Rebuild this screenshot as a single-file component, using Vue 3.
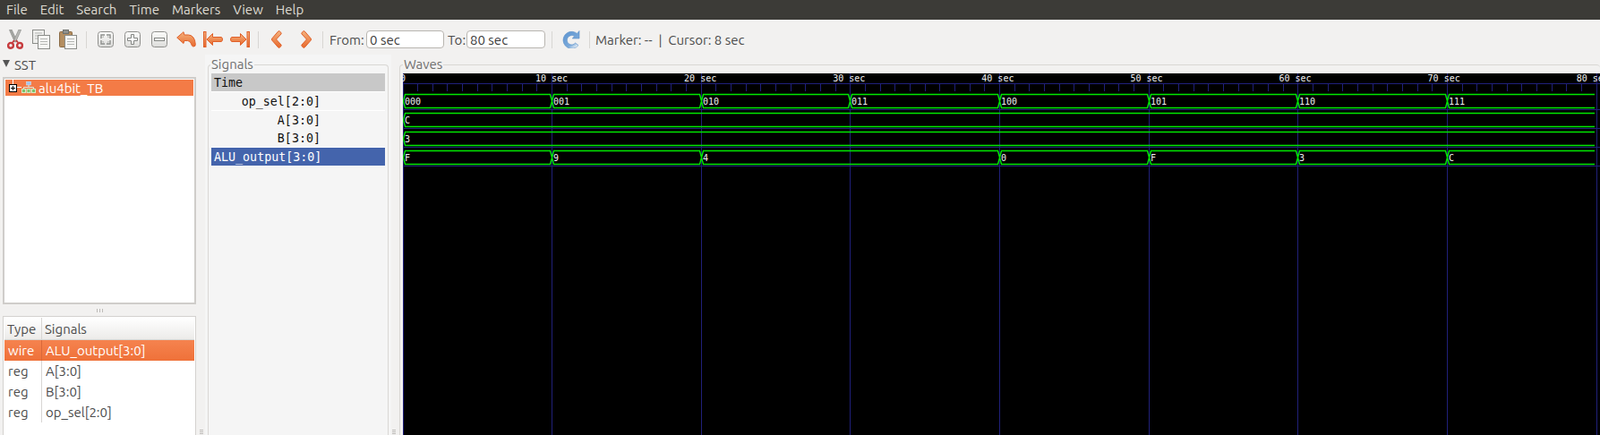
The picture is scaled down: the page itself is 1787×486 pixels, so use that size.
<template>
  <div class="app">
    <div class="menubar">
      <span v-for="m in menus" :key="m" class="menu">{{ m }}</span>
    </div>

    <div class="toolbar">
      <!-- cut -->
      <button class="tool">
        <svg width="18" height="22" viewBox="0 0 18 22">
          <path d="M2.5 0.5 L5 0 L11 13 L8.5 14 Z" fill="#a5a7a3" stroke="#8b8d89" stroke-width="0.7" />
          <path d="M15.5 0.5 L13 0 L7 13 L9.5 14 Z" fill="#b9bab7" stroke="#8b8d89" stroke-width="0.7" />
          <circle cx="4" cy="17.8" r="2.9" fill="none" stroke="#c63c3e" stroke-width="2.4" />
          <circle cx="14" cy="17.8" r="2.9" fill="none" stroke="#c63c3e" stroke-width="2.4" />
          <path d="M6 14.5 L8 12 M12 14.5 L10 12" stroke="#c63c3e" stroke-width="2" />
        </svg>
      </button>
      <!-- copy -->
      <button class="tool ml-10">
        <svg width="20" height="22" viewBox="0 0 20 22">
          <rect x="0.5" y="0.5" width="13" height="15" fill="#eeeeec" stroke="#8b8d89" />
          <path d="M3 4h8M3 7h8M3 10h8" stroke="#b4b6b3" />
          <rect x="6.5" y="6.5" width="13" height="15" fill="#f6f6f4" stroke="#8b8d89" />
          <path d="M9 10.5h8M9 13.5h8M9 16.5h8" stroke="#b4b6b3" />
        </svg>
      </button>
      <!-- paste -->
      <button class="tool ml-10">
        <svg width="20" height="22" viewBox="0 0 20 22">
          <rect x="0.5" y="2.5" width="14" height="17" rx="1" fill="#b48e60" stroke="#8a6a44" />
          <rect x="4.5" y="0.5" width="6" height="4" fill="#8f918d" stroke="#6f716d" />
          <rect x="6.5" y="6.5" width="13" height="15" fill="#f6f6f4" stroke="#8b8d89" />
          <path d="M9 10.5h8M9 13.5h8M9 16.5h8" stroke="#b4b6b3" />
        </svg>
      </button>
      <i class="sep ml-10"></i>
      <!-- zoom fit / in / out -->
      <button class="tool ml-12">
        <svg width="18" height="18" viewBox="0 0 18 18">
          <defs>
            <linearGradient id="keycap" x1="0" y1="0" x2="0" y2="1">
              <stop offset="0" stop-color="#fbfbfa" />
              <stop offset="1" stop-color="#dcdcda" />
            </linearGradient>
            <linearGradient id="orange" x1="0" y1="0" x2="0" y2="1">
              <stop offset="0" stop-color="#f4b27e" />
              <stop offset="1" stop-color="#e8692c" />
            </linearGradient>
            <linearGradient id="blue" x1="0" y1="0" x2="0.7" y2="1">
              <stop offset="0" stop-color="#5c94d0" />
              <stop offset="0.75" stop-color="#7aa9da" />
              <stop offset="1" stop-color="#eaf0f6" />
            </linearGradient>
          </defs>
          <rect x="0.5" y="0.5" width="17" height="17" rx="3" fill="url(#keycap)" stroke="#8f8f8c" />
          <path d="M8 4H4v4M10 4h4v4M14 10v4h-4M8 14H4v-4" fill="none" stroke="#8f918e" stroke-width="1.4" />
          <path d="M7 6H6v1M11 6h1v1M12 11v1h-1M7 12H6v-1" fill="none" stroke="#b0b2af" />
        </svg>
      </button>
      <button class="tool ml-12">
        <svg width="18" height="18" viewBox="0 0 18 18">
          <rect x="0.5" y="0.5" width="17" height="17" rx="3" fill="url(#keycap)" stroke="#8f8f8c" />
          <path d="M7.5 3.5h3v4h4v3h-4v4h-3v-4h-4v-3h4z" fill="#fff" stroke="#858784" />
        </svg>
      </button>
      <button class="tool ml-12">
        <svg width="18" height="18" viewBox="0 0 18 18">
          <rect x="0.5" y="0.5" width="17" height="17" rx="3" fill="url(#keycap)" stroke="#8f8f8c" />
          <rect x="3.5" y="7.5" width="11" height="3" fill="#fff" stroke="#858784" />
        </svg>
      </button>
      <!-- undo zoom -->
      <button class="tool ml-10">
        <svg width="22" height="18" viewBox="0 0 22 18">
          <path d="M0.7 7 L8 0.7 L8.8 4 L13.5 4 Q20.5 4.5 21.3 14.5 Q21.5 17.2 18.8 17 Q17.2 16.8 16.6 14 Q15.5 10.5 12.5 10.5 L8.8 10.5 L8 13.5 Z" fill="url(#orange)" stroke="#e0602a" stroke-linejoin="round" />
        </svg>
      </button>
      <!-- zoom to start -->
      <button class="tool ml-8">
        <svg width="22" height="18" viewBox="0 0 22 18">
          <rect x="0.5" y="0.5" width="2.5" height="17" fill="url(#orange)" stroke="#e0602a" />
          <path d="M4 9 L10.5 2.5 L10.5 6.5 L20 6.5 Q21.5 6.8 21.5 9 Q21.5 11.2 20 11.5 L10.5 11.5 L10.5 15.5 Z" fill="url(#orange)" stroke="#e0602a" stroke-linejoin="round" />
        </svg>
      </button>
      <!-- zoom to end -->
      <button class="tool ml-8">
        <svg width="22" height="18" viewBox="0 0 22 18">
          <rect x="19" y="0.5" width="2.5" height="17" fill="url(#orange)" stroke="#e0602a" />
          <path d="M18 9 L11.5 2.5 L11.5 6.5 L2 6.5 Q0.5 6.8 0.5 9 Q0.5 11.2 2 11.5 L11.5 11.5 L11.5 15.5 Z" fill="url(#orange)" stroke="#e0602a" stroke-linejoin="round" />
        </svg>
      </button>
      <i class="sep ml-9"></i>
      <button class="tool ml-14">
        <svg width="12" height="20" viewBox="0 0 12 20">
          <path d="M8 0.7 Q9 0.3 11 2.5 Q11.5 3.2 11 4 L5.5 10 L11 16 Q11.5 16.8 11 17.5 Q9 19.7 8 19.3 L0.8 11 Q0.2 10 0.8 9 Z" fill="url(#orange)" stroke="#e0602a" stroke-linejoin="round" />
        </svg>
      </button>
      <button class="tool ml-21">
        <svg width="12" height="20" viewBox="0 0 12 20">
          <path d="M4 0.7 Q3 0.3 1 2.5 Q0.5 3.2 1 4 L6.5 10 L1 16 Q0.5 16.8 1 17.5 Q3 19.7 4 19.3 L11.2 11 Q11.8 10 11.2 9 Z" fill="url(#orange)" stroke="#e0602a" stroke-linejoin="round" />
        </svg>
      </button>
      <i class="sep ml-12"></i>
      <label class="lbl lbl-from">From:</label>
      <input class="field field-from" value="0 sec" />
      <label class="lbl lbl-to">To:</label>
      <input class="field field-to" value="80 sec" />
      <i class="sep ml-7"></i>
      <button class="tool ml-11">
        <svg width="20" height="20" viewBox="0 0 20 20">
          <path d="M19 0.5 L19 9 L11.2 9 L13.6 6.6 A5.2 5.2 0 1 0 14.6 14 L18 16.6 A9.5 9.5 0 1 1 12 1.4 A9.5 9.5 0 0 1 16.4 3.4 Z" fill="url(#blue)" stroke="#5a8fc8" stroke-width="0.6" />
        </svg>
      </button>
      <i class="sep ml-10"></i>
      <span class="status">Marker: -- &nbsp;|&nbsp; Cursor: 8 sec</span>
    </div>

    <div class="main">
      <aside class="left">
        <div class="expander"><i class="tri"></i>SST</div>
        <div class="tree">
          <div class="tree-row">
            <i class="stub"></i>
            <svg class="plus" width="9" height="9" viewBox="0 0 9 9">
              <rect x="0.5" y="0.5" width="8" height="8" fill="#fff" stroke="#000" />
              <path d="M2 4.5h5M4.5 2v5" stroke="#000" />
            </svg>
            <svg class="hier" width="16" height="13" viewBox="0 0 16 13">
              <rect x="5.5" y="0" width="5" height="4" fill="#a3c4ea" stroke="#dfe8f2" stroke-width="0.5" />
              <path d="M8 4v3M2.5 8.500V6.500h11v2" stroke="#e3e6da" fill="none" />
              <rect x="0.500" y="8.500" width="4" height="4" fill="#7ec26a" stroke="#d6ecc8" />
              <rect x="6" y="8.500" width="4" height="4" fill="#7ec26a" stroke="#d6ecc8" />
              <rect x="11.500" y="8.500" width="4" height="4" fill="#7ec26a" stroke="#d6ecc8" />
            </svg>
            <span>alu4bit_TB</span>
          </div>
        </div>
        <div class="grip"><i></i><i></i><i></i></div>
        <div class="list">
          <div class="list-head">
            <span class="c1">Type</span>
            <span class="c2">Signals</span>
          </div>
          <div v-for="(s, i) in typeRows" :key="s.name" class="list-row" :class="{ sel: i === 0 }">
            <span class="c1">{{ s.type }}</span>
            <span class="c2">{{ s.name }}</span>
          </div>
        </div>
      </aside>

      <section class="signals">
        <fieldset class="frame sig-frame">
          <legend>Signals</legend>
          <div class="sig-list">
            <div class="sig time">Time</div>
            <div v-for="(s, i) in signals" :key="s" class="sig" :class="{ active: i === 3 }">{{ s }}</div>
          </div>
        </fieldset>
      </section>

      <section class="waves">
        <fieldset class="frame wave-frame">
          <legend>Waves</legend>
          <svg class="canvas" width="1337" height="404" viewBox="0 0 1337 404">
            <path v-for="x in minorTicks" :key="'m' + x" :d="`M${x + 0.5} 11V20`" stroke="#20207a" />
            <path v-for="x in majorTicks" :key="'g' + x" :d="`M${x + 0.5} 0V404`" stroke="#20207a" />
            <path v-for="y in rowLines" :key="'r' + y" :d="`M0 ${y + 0.5}H1337`" stroke="#20207a" />
            <text v-for="(t, i) in timeLabels" :key="t" class="ruler" :x="labelX(i)" y="9">{{ t }}</text>
            <g v-for="(row, r) in rows" :key="r">
              <path :d="wavePath(row, r)" fill="none" stroke="#00e800" stroke-width="1.4" />
              <text v-for="seg in row" :key="seg.at" class="val" :x="segX(seg.at) + 2" :y="rowTop(r) + 12">{{ seg.v }}</text>
            </g>
          </svg>
        </fieldset>
      </section>

      <i class="pane-grip grip-a"></i>
      <i class="pane-grip grip-b"></i>
    </div>
  </div>
</template>

<script setup>
const menus = ['File', 'Edit', 'Search', 'Time', 'Markers', 'View', 'Help']

const typeRows = [
  { type: 'wire', name: 'ALU_output[3:0]' },
  { type: 'reg', name: 'A[3:0]' },
  { type: 'reg', name: 'B[3:0]' },
  { type: 'reg', name: 'op_sel[2:0]' }
]

const signals = ['op_sel[2:0]', 'A[3:0]', 'B[3:0]', 'ALU_output[3:0]']

// 10 sec = 166.66px on the canvas
const step = 166.66
const segX = (at) => Math.floor(at * step)

const majorTicks = Array.from({ length: 9 }, (_, i) => segX(i))
const minorTicks = Array.from({ length: 80 }, (_, i) => Math.floor((i * step) / 10))
const rowLines = [11, 40, 61, 82, 103]

const timeLabels = ['0', '10 sec', '20 sec', '30 sec', '40 sec', '50 sec', '60 sec', '70 sec', '80 sec']
const labelX = (i) => (i === 0 ? -3 : 148 + (i - 1) * 166.1)

const rows = [
  ['000', '001', '010', '011', '100', '101', '110', '111'].map((v, at) => ({ v, at })),
  [{ v: 'C', at: 0 }],
  [{ v: '3', at: 0 }],
  [
    { v: 'F', at: 0 },
    { v: '9', at: 1 },
    { v: '4', at: 2 },
    { v: '0', at: 4 },
    { v: 'F', at: 5 },
    { v: '3', at: 6 },
    { v: 'C', at: 7 }
  ]
]

const rowTop = (r) => 23 + r * 21

const wavePath = (row, r) => {
  const top = rowTop(r) + 0.5
  const bottom = top + 15
  const mid = top + 7.5
  const end = 1331
  let d = ''
  const edges = [...row.map((s) => s.at), 8]
  for (let i = 0; i < edges.length - 1; i++) {
    const a = segX(edges[i]) + 0.5
    const last = edges[i + 1] === 8
    const b = last ? end : segX(edges[i + 1]) - 1.5
    // last segment stays open on the right
    const close = last ? '' : `L${b + 2} ${mid}`
    d += `M${a} ${mid}L${a + 2} ${top}H${b}${close}`
    d += `M${a} ${mid}L${a + 2} ${bottom}H${b}${close}`
  }
  return d
}
</script>

<style>
html, body {
  margin: 0;
  padding: 0;
  overflow: hidden;
  background: #f2f1f0;
}
</style>

<style scoped>
.app {
  width: 1787px;
  height: 486px;
  display: flex;
  flex-direction: column;
  font-family: Ubuntu, "Noto Sans", "Open Sans", sans-serif;
  font-size: 15px;
  color: #4c4c4c;
  background: #f2f1f0;
  overflow: hidden;
}

.menubar {
  height: 22px;
  flex: none;
  display: flex;
  align-items: center;
  background: #3c3b37;
  padding-left: 7px;
  gap: 14px;
}

.menu {
  color: #dfdbd2;
  font-size: 15px;
  line-height: 22px;
}

.toolbar {
  height: 39px;
  flex: none;
  box-sizing: border-box;
  padding: 5px 0 0 8px;
  display: flex;
  align-items: center;
}

.tool {
  padding: 0;
  border: 0;
  background: none;
  display: flex;
  flex: none;
}

.ml-7 { margin-left: 7px; }
.ml-8 { margin-left: 8px; }
.ml-9 { margin-left: 9px; }
.ml-10 { margin-left: 10px; }
.ml-11 { margin-left: 11px; }
.ml-12 { margin-left: 12px; }
.ml-14 { margin-left: 14px; }
.ml-21 { margin-left: 21px; }

.sep {
  width: 1px;
  height: 19px;
  background: #d8d6d3;
  flex: none;
}

.lbl {
  flex: none;
}

.lbl-from {
  width: 41px;
  margin-left: 7px;
}

.lbl-to {
  width: 21px;
  margin-left: 4px;
}

.field {
  box-sizing: border-box;
  height: 20px;
  border: 1px solid #b8b5b0;
  border-radius: 4px;
  background: #fff;
  padding: 0 3px;
  font: inherit;
  color: #3c3c3c;
  outline: none;
}

.field-from { width: 87px; }
.field-to { width: 88px; }

.status {
  margin-left: 6px;
  white-space: pre;
}

.main {
  flex: 1;
  display: flex;
  min-height: 0;
  position: relative;
}

.left {
  width: 229px;
  flex: none;
  padding-left: 3px;
  box-sizing: border-box;
  display: flex;
  flex-direction: column;
}

.expander {
  height: 22px;
  margin-bottom: 3px;
  display: flex;
  align-items: center;
  gap: 5px;
  font-size: 15px;
  flex: none;
}

.tri {
  width: 0;
  height: 0;
  margin-bottom: 2px;
  border-left: 4.5px solid transparent;
  border-right: 4.5px solid transparent;
  border-top: 8px solid #555;
}

.tree {
  height: 254px;
  width: 216px;
  box-sizing: border-box;
  border: 2px solid #cfcdca;
  background: #fff;
  padding: 1px;
  flex: none;
}

.tree-row {
  height: 18px;
  background: #f37b46;
  color: #fff;
  display: flex;
  align-items: center;
  padding-left: 4px;
  position: relative;
}

.stub {
  position: absolute;
  left: 8px;
  top: 0;
  width: 10px;
  height: 9px;
  border-left: 1px solid #fff;
  border-bottom: 1px solid #fff;
  box-sizing: border-box;
}

.plus {
  position: relative;
}

.hier {
  margin: 0 3px 2px 5px;
}

.grip {
  width: 216px;
  height: 13px;
  display: flex;
  align-items: center;
  justify-content: center;
  gap: 2px;
  flex: none;
}

.grip i {
  width: 1px;
  height: 4px;
  background: #bdbbb8;
}

.list {
  flex: 1;
  width: 216px;
  box-sizing: border-box;
  border: 1px solid #d4d2cf;
  border-bottom: 0;
  background: #fff;
  padding: 1px 1px 0;
}

.list-head {
  height: 25px;
  box-sizing: border-box;
  display: flex;
  align-items: center;
  background: linear-gradient(#ffffff, #ecebe9);
  border-bottom: 1px solid #d8d6d3;
}

.list-row {
  height: 23px;
  display: flex;
  align-items: center;
}

.list-row.sel {
  background: linear-gradient(#f5834f, #ef7139);
  color: #fff;
}

.c1 {
  width: 42px;
  box-sizing: border-box;
  padding-left: 4px;
  border-right: 1px solid #d8d6d3;
  height: 100%;
  display: flex;
  align-items: center;
  flex: none;
}

.list-row.sel .c1 {
  border-right-color: #d9683a;
}

.c2 {
  padding-left: 4px;
}

.list-head .c1 {
  padding-left: 3px;
}

.list-head .c2 {
  padding-left: 3px;
}

.signals {
  width: 208px;
  flex: none;
  background: #f5f5f5;
  box-sizing: border-box;
  padding-top: 4px;
  display: flex;
  flex-direction: column;
}

.waves {
  flex: 1;
  min-width: 0;
  margin-left: 9px;
  padding-top: 4px;
  display: flex;
  flex-direction: column;
}

.frame {
  margin: 0;
  min-width: 0;
  flex: 1;
  border: 0;
  border-top: 1px solid #d9d7d4;
  border-left: 1px solid #d9d7d4;
  border-radius: 4px 4px 0 0;
  box-sizing: border-box;
}

.frame legend {
  padding: 0 1px;
  font-size: 15px;
  color: #6f6f6f;
  line-height: 14px;
}

.sig-frame {
  flex: none;
  height: 421px;
  width: 202px;
  margin-left: 3px;
  border-right: 1px solid #d9d7d4;
  padding: 3px 3px 0;
}

.sig-frame legend {
  margin-left: -1px;
}

.sig-list {
  display: flex;
  flex-direction: column;
  gap: 0.75px;
  background: #fff;
}

.sig {
  height: 20px;
  font-family: "DejaVu Sans Mono", monospace;
  font-size: 13.33px;
  line-height: 22px;
  color: #111;
  text-align: right;
  padding: 0 72px 0 3px;
  white-space: pre;
  background: #f5f5f5;
}

.sig.time {
  text-align: left;
  background: #c8c8c8;
}

.sig.active {
  background: #4464ac;
  color: #fff;
}

.wave-frame {
  padding: 3px 0 0 3px;
}

.canvas {
  display: block;
  background: #000;
}

.ruler, .val {
  font-family: "DejaVu Sans Mono", monospace;
  font-size: 10px;
  fill: #f0f0f0;
}

.pane-grip {
  position: absolute;
  top: 419px;
  width: 4px;
  height: 5px;
  background: repeating-linear-gradient(#bdbbb8 0 1px, transparent 1px 2px);
}

.grip-a { left: 223px; }
.grip-b { left: 438px; }
</style>
